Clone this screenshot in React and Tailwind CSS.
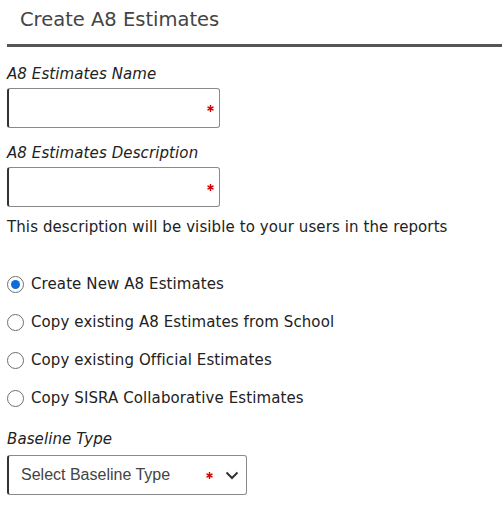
import React, { useState } from "react";

const font = { fontFamily: '"DejaVu Sans", Verdana, sans-serif' };

const Star = () => (
  <svg width="7" height="7" viewBox="0 0 10 10" className="shrink-0">
    <g stroke="#d60000" strokeWidth="2.2" strokeLinecap="round">
      <line x1="5" y1="1" x2="5" y2="9" />
      <line x1="1.5" y1="3" x2="8.5" y2="7" />
      <line x1="1.5" y1="7" x2="8.5" y2="3" />
    </g>
  </svg>
);

const TextBox = () => (
  <div className="w-[213px] h-10 flex items-center justify-end pr-[5px] rounded-[3px] border border-[#8a8a8a] border-l-2 border-l-[#333] bg-white">
    <Star />
  </div>
);

const Radio = ({ label, checked, onClick }) => (
  <button onClick={onClick} className="flex items-center gap-[7px] text-left h-[22px]">
    <span className="w-[17px] h-[17px] rounded-full border border-[#6f6f6f] flex items-center justify-center bg-white">
      {checked && <span className="w-[9px] h-[9px] rounded-full bg-[#0a6ee0]" />}
    </span>
    <span className="text-[15px] tracking-[0.1px] leading-[22px] text-[#222]">{label}</span>
  </button>
);

export default function App() {
  const [choice, setChoice] = useState(0);
  const options = [
    "Create New A8 Estimates",
    "Copy existing A8 Estimates from School",
    "Copy existing Official Estimates",
    "Copy SISRA Collaborative Estimates",
  ];

  return (
    <div className="w-[502px] bg-white" style={font}>
      <div className="pl-[7px]">
        <h1 className="pl-[13px] pt-[8px] pb-[12px] text-[19.5px] leading-[24px] text-[#444] border-b-[3px] border-[#555]">
          Create A8 Estimates
        </h1>
      </div>

      <div className="pl-[7px] pt-[16px]">
        <div className="italic text-[15px] tracking-[0.1px] text-[#222] leading-[22px] mb-[3px]">A8 Estimates Name</div>
        <TextBox />

        <div className="italic text-[15px] tracking-[0.1px] text-[#222] leading-[22px] mt-[14px] mb-[3px]">A8 Estimates Description</div>
        <TextBox />

        <p className="text-[15px] tracking-[0.1px] text-[#222] mt-[9px] leading-[22px]">
          This description will be visible to your users in the reports
        </p>

        <div className="mt-[35px] flex flex-col gap-[16px]">
          {options.map((o, i) => (
            <Radio key={o} label={o} checked={choice === i} onClick={() => setChoice(i)} />
          ))}
        </div>

        <div className="italic text-[15px] tracking-[0.1px] text-[#222] leading-[22px] mt-[19px] mb-[5px]">Baseline Type</div>
        <div className="w-[240px] h-10 flex items-center rounded-[3px] border border-[#8a8a8a] border-l-2 border-l-[#333] bg-white pl-[12px] pr-[7px]">
          <span className="flex-1 text-[16px] text-[#444]" style={{ fontFamily: '"Liberation Sans", Arial, sans-serif' }}>
            Select Baseline Type
          </span>
          <Star />
          <svg width="14" height="14" viewBox="0 0 14 14" className="ml-[12px]">
            <path d="M1.5 4.5 L7 10 L12.5 4.5" fill="none" stroke="#333" strokeWidth="2" />
          </svg>
        </div>
      </div>
    </div>
  );
}
